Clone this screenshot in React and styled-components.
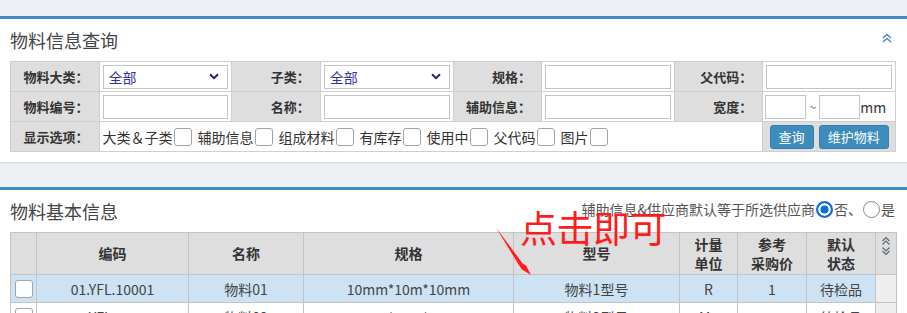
import React from "react";
import styled, { createGlobalStyle } from "styled-components";

const GlobalStyle = createGlobalStyle`
  html, body { margin: 0; padding: 0; }
  body {
    background: #ecf0f5;
    font-family: "Noto Sans CJK SC", "Noto Sans", sans-serif;
    color: #333;
    overflow: hidden;
  }
  * { box-sizing: border-box; }
`;

const Page = styled.div`
  position: relative;
  padding-top: 16px;
`;

const Box = styled.section`
  background: #fff;
  border-top: 3px solid #3c8dbc;
  box-shadow: 0 1px 1px rgba(0, 0, 0, 0.1);
  margin-bottom: ${(p) => p.$gap || 0}px;
`;

const BoxHeader = styled.div`
  display: flex;
  align-items: center;
  justify-content: space-between;
  height: 32px;
  padding: 10px 12px 0 10px;
`;

const Title = styled.h3`
  margin: 0;
  font-size: 18px;
  font-weight: normal;
  color: #444;
  line-height: 22px;
`;

const BoxBody = styled.div`
  padding: 10px 11px ${(p) => p.$pb ?? 10}px 10px;
`;

const CollapseBtn = styled.span`
  display: flex;
  width: 12px;
  height: 12px;
  margin-top: -4px;
  margin-right: 2px;
`;

const FilterTable = styled.table`
  width: 100%;
  table-layout: fixed;
  border-collapse: collapse;
  border: 1px solid #cfcfcf;
`;

const LabelCell = styled.td`
  height: 30px;
  padding: 0 10px 0 0;
  background: #dedede;
  border: 1px solid #cfcfcf;
  text-align: right;
  font-size: 13px;
  font-weight: bold;
  color: #333;
  white-space: nowrap;
`;

const FieldCell = styled.td`
  height: 30px;
  padding: 0 ${(p) => p.$px ?? 2}px;
  border: 1px solid #cfcfcf;
  background: ${(p) => (p.$gray ? "#dedede" : "#fff")};
`;

const TextInput = styled.div`
  height: 24px;
  width: ${(p) => (p.$w ? `${p.$w}px` : "100%")};
  border: 1px solid #c4c4c4;
  background: #fff;
  flex: none;
`;

const SelectBox = styled.div`
  height: 24px;
  width: 100%;
  border: 1px solid #c4c4c4;
  background: #fff;
  display: flex;
  align-items: center;
  justify-content: space-between;
  padding: 0 8px 0 5px;
  font-size: 14px;
  color: #33339a;
`;

const Range = styled.div`
  display: flex;
  align-items: center;
  font-size: 14px;
  color: #333;
`;

const Tilde = styled.span`
  width: 13px;
  text-align: center;
  font-size: 12px;
  color: #666;
`;

const Options = styled.div`
  display: flex;
  align-items: center;
  padding-left: 1px;
  font-size: 14px;
  color: #333;
`;

const OptionItem = styled.label`
  display: flex;
  align-items: center;
  margin-right: 6px;
  white-space: nowrap;
`;

const CheckBox = styled.span`
  display: inline-block;
  width: ${(p) => p.$size || 18}px;
  height: ${(p) => p.$size || 18}px;
  border: 1px solid #a3a3a3;
  border-radius: 3px;
  background: #fff;
  margin-left: 1px;
`;

const Buttons = styled.div`
  display: flex;
  justify-content: center;
  gap: 5px;
`;

const Button = styled.button`
  height: 24px;
  padding: 0 8px;
  border: 1px solid #367fa9;
  border-radius: 3px;
  background: #3c8dbc;
  color: #fff;
  font-family: inherit;
  font-size: 13px;
  line-height: 22px;
`;

const HeaderRight = styled.div`
  display: flex;
  align-items: center;
  font-size: 14px;
  color: #555;
  margin-top: -4px;
`;

const Radio = styled.span`
  display: inline-block;
  width: 17px;
  height: 17px;
  border-radius: 50%;
  margin: 0 1px 0 1px;
  border: ${(p) => (p.$checked ? "2px solid #0a6fe0" : "1px solid #8a8a8a")};
  background: ${(p) => (p.$checked ? "#0a6fe0" : "#fff")};
  box-shadow: ${(p) => (p.$checked ? "inset 0 0 0 2.5px #fff" : "none")};
`;

const DataTable = styled.table`
  width: 100%;
  table-layout: fixed;
  border-collapse: collapse;
  border: 1px solid #c4c4c4;
`;

const Th = styled.th`
  height: 42px;
  padding: 0;
  background: #dedede;
  border: 1px solid #c4c4c4;
  font-size: 14px;
  font-weight: bold;
  line-height: 19px;
  color: #333;
  text-align: center;
  vertical-align: ${(p) => (p.$top ? "top" : "middle")};
`;

const Tr = styled.tr`
  background: ${(p) => (p.$selected ? "#cde2f3" : "#fff")};
`;

const Td = styled.td`
  height: 28px;
  padding: 0;
  border: 1px solid #c4c4c4;
  font-size: 14px;
  color: #444;
  text-align: center;
  white-space: nowrap;
  overflow: hidden;
  background: ${(p) => (p.$gray ? "#eeeeee" : "transparent")};
`;

const CheckCell = styled.div`
  display: flex;
  justify-content: center;
  align-items: center;
`;

const Annotation = styled.div`
  position: absolute;
  left: 520px;
  top: 207px;
  font-size: 37px;
  line-height: 40px;
  color: #ff1c1c;
  letter-spacing: -0.5px;
  pointer-events: none;
`;

const Arrow = styled.svg`
  position: absolute;
  left: 490px;
  top: 220px;
  pointer-events: none;
`;

const SortIcon = styled.svg`
  display: block;
  margin: 3px auto 0;
`;

const Chevron = () => (
  <svg width="10" height="7" viewBox="0 0 10 7">
    <path d="M1 1.2 L5 5.2 L9 1.2" fill="none" stroke="#1c2470" strokeWidth="2" />
  </svg>
);

const filterCols = [10, 15, 10, 15, 10, 15, 10, 15];
const dataCols = [26, 152, 115, 210, 166, 58, 69, 69, 21];

const options = ["大类＆子类", "辅助信息", "组成材料", "有库存", "使用中", "父代码", "图片"];

const rows = [
  { code: "01.YFL.10001", name: "物料01", spec: "10mm*10m*10mm", model: "物料1型号", unit: "R", price: "1", state: "待检品", selected: true },
  { code: "01.YFL.10002", name: "物料02", spec: "10mm*10m*10mm", model: "物料2型号", unit: "M2", price: "2", state: "待检品" },
];

export default function App() {
  return (
    <>
      <GlobalStyle />
      <Page>
        <Box $gap={25}>
          <BoxHeader>
            <Title>物料信息查询</Title>
            <CollapseBtn>
              <svg width="12" height="12" viewBox="0 0 12 12">
                <path d="M2 6 L6 2.5 L10 6 M2 10 L6 6.5 L10 10" fill="none" stroke="#4a86c5" strokeWidth="1.5" />
              </svg>
            </CollapseBtn>
          </BoxHeader>
          <BoxBody>
            <FilterTable>
              <colgroup>
                {filterCols.map((w, i) => (
                  <col key={i} style={{ width: `${w}%` }} />
                ))}
              </colgroup>
              <tbody>
                <tr>
                  <LabelCell>物料大类：</LabelCell>
                  <FieldCell $px={3}>
                    <SelectBox>
                      全部
                      <Chevron />
                    </SelectBox>
                  </FieldCell>
                  <LabelCell>子类：</LabelCell>
                  <FieldCell $px={3}>
                    <SelectBox>
                      全部
                      <Chevron />
                    </SelectBox>
                  </FieldCell>
                  <LabelCell>规格：</LabelCell>
                  <FieldCell $px={3}>
                    <TextInput />
                  </FieldCell>
                  <LabelCell>父代码：</LabelCell>
                  <FieldCell $px={3}>
                    <TextInput />
                  </FieldCell>
                </tr>
                <tr>
                  <LabelCell>物料编号：</LabelCell>
                  <FieldCell $px={3}>
                    <TextInput />
                  </FieldCell>
                  <LabelCell>名称：</LabelCell>
                  <FieldCell $px={3}>
                    <TextInput />
                  </FieldCell>
                  <LabelCell>辅助信息：</LabelCell>
                  <FieldCell $px={3}>
                    <TextInput />
                  </FieldCell>
                  <LabelCell>宽度：</LabelCell>
                  <FieldCell $px={2}>
                    <Range>
                      <TextInput $w={41} />
                      <Tilde>~</Tilde>
                      <TextInput $w={41} />
                      <span>mm</span>
                    </Range>
                  </FieldCell>
                </tr>
                <tr>
                  <LabelCell>显示选项：</LabelCell>
                  <FieldCell colSpan={6} $px={2}>
                    <Options>
                      {options.map((o) => (
                        <OptionItem key={o}>
                          {o}
                          <CheckBox />
                        </OptionItem>
                      ))}
                    </Options>
                  </FieldCell>
                  <FieldCell $gray $px={0}>
                    <Buttons>
                      <Button>查询</Button>
                      <Button>维护物料</Button>
                    </Buttons>
                  </FieldCell>
                </tr>
              </tbody>
            </FilterTable>
          </BoxBody>
        </Box>

        <Box>
          <BoxHeader>
            <Title>物料基本信息</Title>
            <HeaderRight>
              辅助信息&amp;供应商默认等于所选供应商
              <Radio $checked />
              否、
              <Radio />
              是
            </HeaderRight>
          </BoxHeader>
          <BoxBody $pb={20}>
            <DataTable>
              <colgroup>
                {dataCols.map((w, i) => (
                  <col key={i} style={{ width: `${w}px` }} />
                ))}
              </colgroup>
              <thead>
                <tr>
                  <Th />
                  <Th>编码</Th>
                  <Th>名称</Th>
                  <Th>规格</Th>
                  <Th>型号</Th>
                  <Th>
                    计量
                    <br />
                    单位
                  </Th>
                  <Th>
                    参考
                    <br />
                    采购价
                  </Th>
                  <Th>
                    默认
                    <br />
                    状态
                  </Th>
                  <Th $top>
                    <SortIcon width="10" height="20" viewBox="0 0 10 20">
                      <path
                        d="M1.5 5 L5 1.5 L8.5 5 M1.5 8.5 L5 5 L8.5 8.5 M1.5 11.5 L5 15 L8.5 11.5 M1.5 15 L5 18.5 L8.5 15"
                        fill="none"
                        stroke="#5a6a7a"
                        strokeWidth="1.2"
                      />
                    </SortIcon>
                  </Th>
                </tr>
              </thead>
              <tbody>
                {rows.map((r) => (
                  <Tr key={r.code} $selected={r.selected}>
                    <Td>
                      <CheckCell>
                        <CheckBox $size={18} />
                      </CheckCell>
                    </Td>
                    <Td>{r.code}</Td>
                    <Td>{r.name}</Td>
                    <Td>{r.spec}</Td>
                    <Td>{r.model}</Td>
                    <Td>{r.unit}</Td>
                    <Td>{r.price}</Td>
                    <Td>{r.state}</Td>
                    <Td $gray />
                  </Tr>
                ))}
              </tbody>
            </DataTable>
          </BoxBody>
        </Box>

        <Annotation>点击即可</Annotation>
        <Arrow width="50" height="60" viewBox="0 0 50 60">
          <polygon
            points="6,7.5 32.4,43.2 36.2,45.8 41,55 32,49.4 29.2,45.6"
            fill="#ff1c1c"
          />
        </Arrow>
      </Page>
    </>
  );
}
